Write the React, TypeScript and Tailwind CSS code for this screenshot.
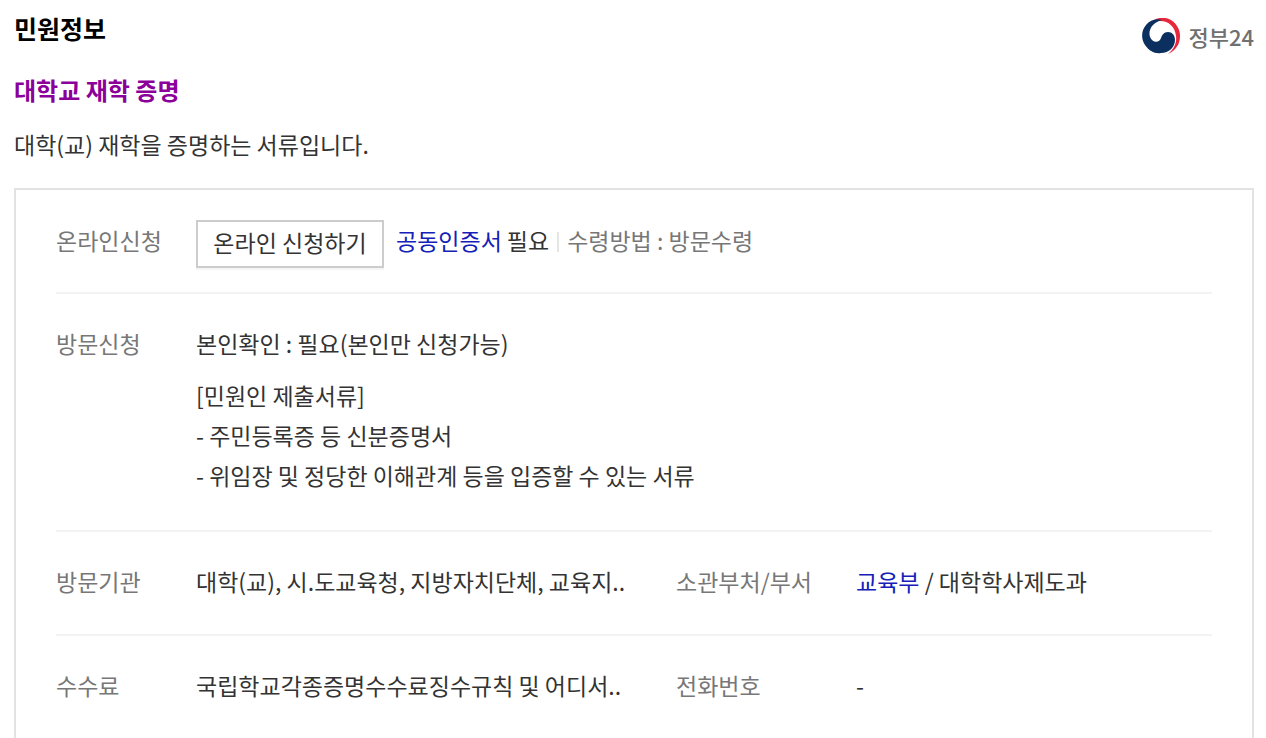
import * as React from 'react'

function Emblem() {
  return (
    <svg viewBox="0 0 38 36" className="w-[38px] h-9" aria-hidden="true">
      <path
        fill="#e8273d"
        d="M12 2C17 -1 24 -1 29 2C35 6 38 12 38 18C38 26 34 32 26 36C32 31 35 25 34 18C33 9 27 3 18 3C16 3 14 3 12 2Z"
      />
      <path
        fill="#0b2f5f"
        d="M20 2C14 0 8 2 4 7C-1 13 -1 21 3 27C7 33 13 36 19 35C27 35 33 29 33 22C33 17 30 14 26 14C22 14 20 17 19 20C18 24 13 25 10 22C6 18 7 11 11 7C14 4 17 3 20 2Z"
      />
    </svg>
  )
}

function Row(props: { className?: string; children: React.ReactNode }) {
  return (
    <div
      className={`grid grid-cols-[140px_minmax(0,480fr)_180px_minmax(0,356fr)] border-b-2 border-[#f3f3f3] last:border-b-0 ${
        props.className ?? 'pt-[29px] pb-[33px]'
      }`}
    >
      {props.children}
    </div>
  )
}

function Label(props: { children: React.ReactNode }) {
  return <dt className="text-[#777777]">{props.children}</dt>
}

export default function App() {
  return (
    <main className="bg-white pl-[14px] pr-3 pt-2 font-['Noto_Sans_CJK_KR',sans-serif] text-[23px] leading-10 text-[#333333]">
      <header className="flex items-start justify-between">
        <h1 className="text-[25px] font-bold text-black">민원정보</h1>
        <a href="#" className="flex items-center gap-2 pt-2 text-[22px] font-medium text-[#707070]">
          <Emblem />
          정부24
        </a>
      </header>

      <h2 className="mt-[14px] text-[24px] font-bold text-[#8b0099]">대학교 재학 증명</h2>
      <p className="mt-[14px]">대학(교) 재학을 증명하는 서류입니다.</p>

      <dl className="mt-6 border-2 border-b-0 border-[#e2e2e2] px-10">
        <Row className="pt-[30px] pb-6">
          <Label>온라인신청</Label>
          <dd className="col-span-3 flex items-start">
            <button
              type="button"
              className="h-12 w-[188px] border-2 border-[#cccccc] pb-1 leading-9 shadow-[0_2px_0_#f5f5f5]"
            >
              온라인 신청하기
            </button>
            <div className="ml-3 flex items-center">
              <a href="#" className="mr-[5px] text-[#1420b8]">
                공동인증서
              </a>
              필요
              <span className="mx-2 mt-1 h-5 w-[2px] bg-[#e5e5e5]" />
              <span className="text-[#777777]">수령방법 : 방문수령</span>
            </div>
          </dd>
        </Row>

        <Row className="pt-[29px] pb-[35px]">
          <Label>방문신청</Label>
          <dd className="col-span-3">
            <p>본인확인 : 필요(본인만 신청가능)</p>
            <p className="mt-3">[민원인 제출서류]</p>
            <p>- 주민등록증 등 신분증명서</p>
            <p>- 위임장 및 정당한 이해관계 등을 입증할 수 있는 서류</p>
          </dd>
        </Row>

        <Row>
          <Label>방문기관</Label>
          <dd>대학(교), 시.도교육청, 지방자치단체, 교육지..</dd>
          <Label>소관부처/부서</Label>
          <dd>
            <a href="#" className="text-[#1420b8]">
              교육부
            </a>{' '}
            / 대학학사제도과
          </dd>
        </Row>

        <Row>
          <Label>수수료</Label>
          <dd>국립학교각종증명수수료징수규칙 및 어디서..</dd>
          <Label>전화번호</Label>
          <dd>-</dd>
        </Row>
      </dl>
    </main>
  )
}
